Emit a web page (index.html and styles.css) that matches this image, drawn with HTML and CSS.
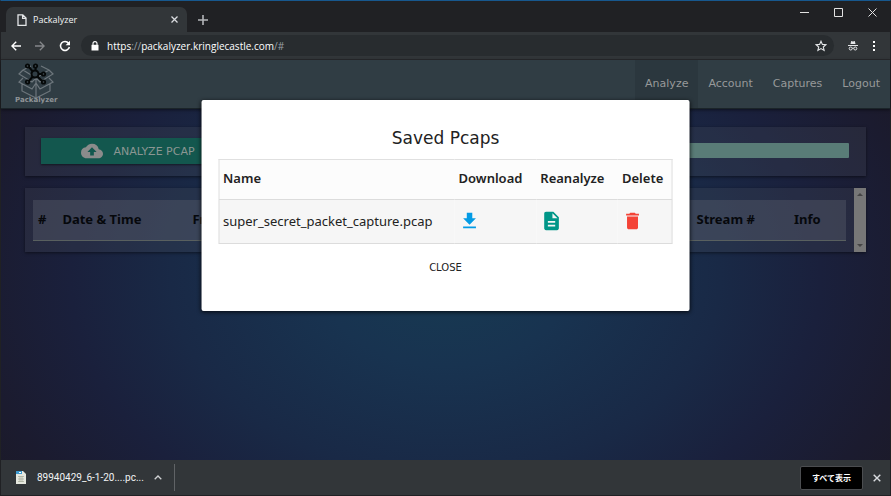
FILE: index.html
```html
<!DOCTYPE html>
<html lang="en">
<head>
<meta charset="utf-8">
<title>Packalyzer</title>
<link rel="stylesheet" href="styles.css">
</head>
<body>
<div class="window">
  <header class="titlebar">
    <div class="tab">
      <svg class="tab-icon" width="10" height="12" viewBox="0 0 10 12" fill="none" stroke="#e4e6e8" stroke-width="1.3"><path d="M1 .8h4.800L9 4v7.300H1zM5.600 1v3.400H9"/></svg>
      <span class="tab-title">Packalyzer</span>
      <button class="icon-button" aria-label="Close tab"><svg width="7" height="7" viewBox="0 0 7 7" stroke="#dadce0" stroke-width="1.3"><path d="M.5.5l6 6M6.500.5l-6 6"/></svg></button>
    </div>
    <button class="icon-button new-tab" aria-label="New tab"><svg width="10" height="10" viewBox="0 0 10 10" stroke="#b4b6b9" stroke-width="1.6"><path d="M5 0v10M0 5h10"/></svg></button>
    <div class="window-controls">
      <button class="icon-button" aria-label="Minimize"><svg width="9" height="9" viewBox="0 0 9 9" stroke="#e2e2e2"><path d="M0 4.500h9"/></svg></button>
      <button class="icon-button" aria-label="Maximize"><svg width="9" height="9" viewBox="0 0 9 9" fill="none" stroke="#e2e2e2"><path d="M.5.5h8v8h-8z"/></svg></button>
      <button class="icon-button" aria-label="Close window"><svg width="9" height="9" viewBox="0 0 9 9" stroke="#e2e2e2"><path d="M.5.5l8 8M8.500.5l-8 8"/></svg></button>
    </div>
  </header>

  <div class="toolbar">
    <button class="icon-button" aria-label="Back"><svg width="10" height="10" viewBox="0 0 10 10" fill="none" stroke="#fff" stroke-width="1.4"><path d="M10 5H1M5.200.7L.9 5l4.300 4.300"/></svg></button>
    <button class="icon-button" aria-label="Forward"><svg width="10" height="10" viewBox="0 0 10 10" fill="none" stroke="#85878a" stroke-width="1.3"><path d="M0 5h9M4.800.7L9.100 5 4.800 9.300"/></svg></button>
    <button class="icon-button" aria-label="Reload"><svg width="12" height="12" viewBox="0 0 12 12"><path d="M9.600 3.200A4.500 4.500 0 1 0 10.400 7" fill="none" stroke="#fff" stroke-width="1.5"/><path d="M11 .8v4.400H6.600z" fill="#fff"/></svg></button>
    <div class="address">
      <svg width="8" height="10" viewBox="0 0 8 10"><path d="M2 4V2.600a2 2 0 0 1 4 0V4" fill="none" stroke="#fff" stroke-width="1.1"/><path d="M.5 3.800h7v5.700h-7z" fill="#fff"/></svg>
      <span class="url">https<span class="dim">://</span>packalyzer.kringlecastle.com<span class="dim">/#</span></span>
      <button class="icon-button" aria-label="Bookmark"><svg width="12" height="12" viewBox="0 0 12 12" fill="none" stroke="#e4e6e8" stroke-width="1.1"><path d="M6 1.200l1.400 3.200 3.500.3-2.600 2.300.8 3.400L6 8.600l-3.100 1.800.8-3.400L1.100 4.700l3.500-.3z"/></svg></button>
    </div>
    <svg class="incognito" width="10" height="11" viewBox="0 0 10 11" fill="none" stroke="#e4e6e8"><path d="M2.500 4L3.200 1l1.800.6L6.800 1l.7 3z" fill="#e4e6e8" stroke="none"/><path d="M0 5.500h10M4.300 8.200h1.400"/><circle cx="2.700" cy="8.500" r="1.500"/><circle cx="7.300" cy="8.500" r="1.500"/></svg>
    <button class="icon-button" aria-label="Menu"><svg width="4" height="12" viewBox="0 0 4 12" fill="#fff"><path d="M1 1h2v2H1zM1 5h2v2H1zM1 9h2v2H1z"/></svg></button>
  </div>

  <main class="page">
    <nav class="nav">
      <a class="brand" href="#" aria-label="Home">
        <svg width="36" height="36" viewBox="0 0 36 36" fill="none">
          <g stroke="#6d767c" stroke-width="1.200"><path d="M5 7L18 15 31 7M5 7L1 11l13 8 4-4 4 4 13-8-4-4M5 7l8-4M31 7l-8-4M5 15l-4 4 13 7 4-6 4 6 13-7-4-4M4 21v7l14 7 14-7v-7M18 15v20"/></g>
          <g stroke="#050808" stroke-width="2"><path d="M17 11L10 3M17 11l1-8M17 11h9M17 11l-7 8M17 11l8 8"/><circle cx="17" cy="11" r="3.500" fill="#303d44"/><g fill="#4a555b" stroke-width="1.800"><circle cx="9.500" cy="3" r="1.700"/><circle cx="17.500" cy="3" r="1.700"/><circle cx="25.500" cy="11" r="1.700"/><circle cx="9.500" cy="19" r="1.700"/><circle cx="25.500" cy="19" r="1.700"/></g></g>
        </svg>
        <span class="brand-name">Packalyzer</span>
      </a>
      <a class="nav-link active" href="#">Analyze</a>
      <a class="nav-link" href="#">Account</a>
      <a class="nav-link" href="#">Captures</a>
      <a class="nav-link" href="#">Logout</a>
    </nav>

    <section class="panel upload">
      <button class="analyze"><svg width="22" height="16" viewBox="0 4 24 16" fill="#8b8b8b"><path d="M19.350 10.040A7.490 7.490 0 0 0 12 4C9.110 4 6.600 5.640 5.350 8.040A5.994 5.994 0 0 0 0 14c0 3.310 2.690 6 6 6h13c2.760 0 5-2.240 5-5 0-2.640-2.050-4.780-4.650-4.960zM14 13v4h-4v-4H7l5-5 5 5h-3z"/></svg>Analyze Pcap</button>
      <div class="progress"></div>
    </section>

    <section class="panel packets">
      <table class="packet-table">
        <thead><tr><th class="c-num">#</th><th class="c-date">Date &amp; Time</th><th class="c-from">From</th><th class="c-stream">Stream #</th><th class="c-info">Info</th></tr></thead>
      </table>
      <div class="scrollbar"><svg width="6" height="3" viewBox="0 0 6 3" fill="#454545"><path d="M0 3l3-3 3 3z"/></svg><svg width="6" height="3" viewBox="0 0 6 3" fill="#454545"><path d="M0 0l3 3 3-3z"/></svg></div>
    </section>

    <div class="dialog" role="dialog" aria-labelledby="dialog-title">
      <h2 id="dialog-title">Saved Pcaps</h2>
      <table class="captures">
        <thead><tr><th class="c-name">Name</th><th class="c-download">Download</th><th class="c-reanalyze">Reanalyze</th><th>Delete</th></tr></thead>
        <tbody><tr>
          <td>super_secret_packet_capture.pcap</td>
          <td><button class="icon-button" aria-label="Download"><svg width="22" height="22" viewBox="0 0 24 24" fill="#039be5"><path d="M19 9h-4V3H9v6H5l7 7 7-7zM5 18v2h14v-2z"/></svg></button></td>
          <td><button class="icon-button" aria-label="Reanalyze"><svg width="22" height="22" viewBox="0 0 24 24" fill="#009688"><path d="M14 2H6c-1.100 0-1.990.9-1.990 2L4 20c0 1.100.89 2 1.990 2H18c1.100 0 2-.9 2-2V8l-6-6zm2 16H8v-2h8v2zm0-4H8v-2h8v2zm-3-5V3.500L18.500 9H13z"/></svg></button></td>
          <td><button class="icon-button" aria-label="Delete"><svg width="22" height="22" viewBox="0 0 24 24" fill="#f44336"><path d="M6 19c0 1.100.9 2 2 2h8c1.100 0 2-.9 2-2V7H6v12zM19 4h-3.500l-1-1h-5l-1 1H5v2h14V4z"/></svg></button></td>
        </tr></tbody>
      </table>
      <button class="close">Close</button>
    </div>
  </main>

  <footer class="downloads">
    <button class="download-item">
      <svg width="10" height="13" viewBox="0 0 10 13"><path d="M0 0h7l3 3v10H0z" fill="#e6e8df"/><path d="M0 0h6v3H0z" fill="#3d9ad0"/><path d="M3 1h2v1H3z" fill="#fff"/><path d="M2 5.500h6M2 8h6M2 10.500h6M4 5v6M6 5v6" stroke="#a5aa98" stroke-width=".7"/></svg>
      <span class="file-name">89940429_6-1-20....pc...</span>
      <svg width="8" height="5" viewBox="0 0 8 5" fill="none" stroke="#d0d2d4" stroke-width="1.300"><path d="M.7 4.300L4 1l3.300 3.300"/></svg>
    </button>
    <button class="show-all">すべて表示</button>
    <button class="icon-button" aria-label="Close downloads"><svg width="8" height="8" viewBox="0 0 8 8" stroke="#dadce0" stroke-width="1.400"><path d="M.7.7l6.600 6.600M7.300.7L.7 7.300"/></svg></button>
  </footer>
</div>
</body>
</html>
```
FILE: styles.css
```css
* { box-sizing: border-box; }

body {
  margin: 0;
  font-family: "DejaVu Sans", sans-serif;
}

button {
  border: 0;
  padding: 0;
  background: none;
  font: inherit;
  color: inherit;
}

svg { display: block; flex: none; }
a { text-decoration: none; }
.icon-button { display: block; flex: none; }

.window {
  display: flex;
  flex-direction: column;
  height: 100vh;
  border: 1px solid #202124;
  border-top-color: #17588e;
  background: #202124;
}

/* Browser frame */
.titlebar { display: flex; height: 31px; padding: 6px 13px 0 5px; }

.tab {
  display: flex;
  align-items: center;
  width: 181px;
  padding: 0 9px 0 11px;
  border-radius: 7px 7px 0 0;
  background: #323639;
  color: #f1f3f4;
  font: 9px "Open Sans", sans-serif;
}

.tab-title { flex: 1; margin-left: 6px; }
.new-tab { align-self: center; margin-left: 11px; }
.window-controls { display: flex; gap: 25px; margin-left: auto; }
.window-controls .icon-button { height: 10px; }

.toolbar {
  display: flex;
  align-items: center;
  gap: 14px;
  height: 28px;
  padding: 0 14px 0 10px;
  border-bottom: 1px solid #28292c;
  background: #323639;
}

.address {
  display: flex;
  align-items: center;
  flex: 1;
  gap: 8px;
  height: 21px;
  margin-left: -4px;
  padding: 0 7px 0 10px;
  border-radius: 11px;
  background: #282c2f;
  font: 10px "Open Sans", sans-serif;
}

.url { flex: 1; color: #fff; }
.dim { color: #9aa0a6; }

/* Application page */
.page {
  position: relative;
  flex: 1;
  background: radial-gradient(ellipse 500px 360px at 50% 54%, #173a52 0%, #183350 25%, #192946 55%, #1a203c 75%, #1b1b2f 95%, #1c1923 115%);
}

.nav {
  display: flex;
  height: 49px;
  border-bottom: 1px solid #1b2429;
  background: #303d44;
  box-shadow: 0 1px 3px rgba(0, 0, 0, 0.5);
  font-size: 11px;
}

.brand {
  display: flex;
  flex-direction: column;
  align-items: center;
  margin: 3px auto 0 14px;
}

.brand-name {
  margin-top: -3px;
  color: #8f9497;
  font: bold 7px/8px "DejaVu Sans", sans-serif;
}

.nav-link { padding: 0 10px; color: #97999a; line-height: 48px; }
.active { background: #2b373e; }

.panel {
  display: flex;
  margin: 18px 24px 0;
  background: rgba(76, 78, 92, 0.25);
  box-shadow: 0 1px 3px rgba(0, 0, 0, 0.5);
}

.upload { gap: 16px; height: 49px; padding: 11px 17px 0 16px; }

.analyze {
  display: flex;
  align-items: center;
  justify-content: center;
  gap: 10px;
  width: 194px;
  height: 26px;
  background: #13574e;
  box-shadow: 0 1px 2px rgba(0, 0, 0, 0.5);
  color: #8b9693;
  font-size: 11px;
  text-transform: uppercase;
}

.progress { flex: 1; height: 15px; margin-top: 5px; border-radius: 0 1px 1px 0; background: #597c77; }

.packets { height: 64px; margin-top: 12px; padding: 12px 0 0 8px; }

.packet-table {
  flex: 1;
  height: 41px;
  border-collapse: collapse;
  border-bottom: 1px solid #59605f;
  background: rgba(88, 92, 108, 0.42);
  table-layout: fixed;
  color: #06080c;
  font: 13px "Noto Sans", sans-serif;
  text-align: left;
}

.packet-table th { padding: 0 5px 2px; font-weight: 700; }
.c-num { width: 3%; }
.c-date { width: 16%; }
.c-from { width: 62%; }
.c-stream { width: 12%; }

.scrollbar {
  display: flex;
  flex-direction: column;
  align-items: center;
  justify-content: space-between;
  width: 12px;
  margin: -12px 0 0 8px;
  padding: 5px 0;
  background: #777;
}

/* Saved captures dialog */
.dialog {
  position: absolute;
  top: 40px;
  left: 50%;
  width: 55%;
  padding: 24px 17px 34px;
  border-radius: 2px;
  background: #fff;
  box-shadow: 0 1px 4px rgba(0, 0, 0, 0.8);
  color: #222;
  text-align: center;
  transform: translateX(-50%);
}

h2 { margin: 0 0 6px; font-size: 17px; line-height: 29px; font-weight: 400; }

.captures {
  width: 100%;
  border: 1px solid #e0e0e0;
  border-collapse: collapse;
  table-layout: fixed;
  background: #fcfcfc;
  font: 13px "Noto Sans", sans-serif;
  text-align: left;
}

.captures tr { border-bottom: 1px solid #dcdcdc; }
.captures th { height: 40px; padding: 0 4px 3px; font-weight: 600; }
.captures td { height: 44px; padding: 0 4px 2px; }
.captures tbody { background: #f6f6f6; }
.c-name { width: 52%; }
.c-download, .c-reanalyze { width: 18%; }

.close { display: block; margin: 15px auto 0; font-size: 10px; line-height: 18px; text-transform: uppercase; }

/* Download shelf */
.downloads {
  display: flex;
  align-items: center;
  height: 35px;
  padding: 0 9px 0 15px;
  background: #323639;
  color: #f1f3f4;
  font-size: 10px;
}

.download-item {
  display: flex;
  align-items: center;
  height: 27px;
  padding-right: 12px;
  border-right: 1px solid #606366;
}

.file-name { margin: 0 10px 0 11px; font-family: Roboto, sans-serif; }

.show-all {
  height: 24px;
  margin: 0 10px 0 auto;
  padding: 0 11px;
  border: 1px solid #4b4d50;
  border-radius: 2px;
  background: #000;
  color: #fff;
  font-family: "Noto Sans CJK JP", sans-serif;
  font-size: 8px;
  font-weight: 700;
}
```
